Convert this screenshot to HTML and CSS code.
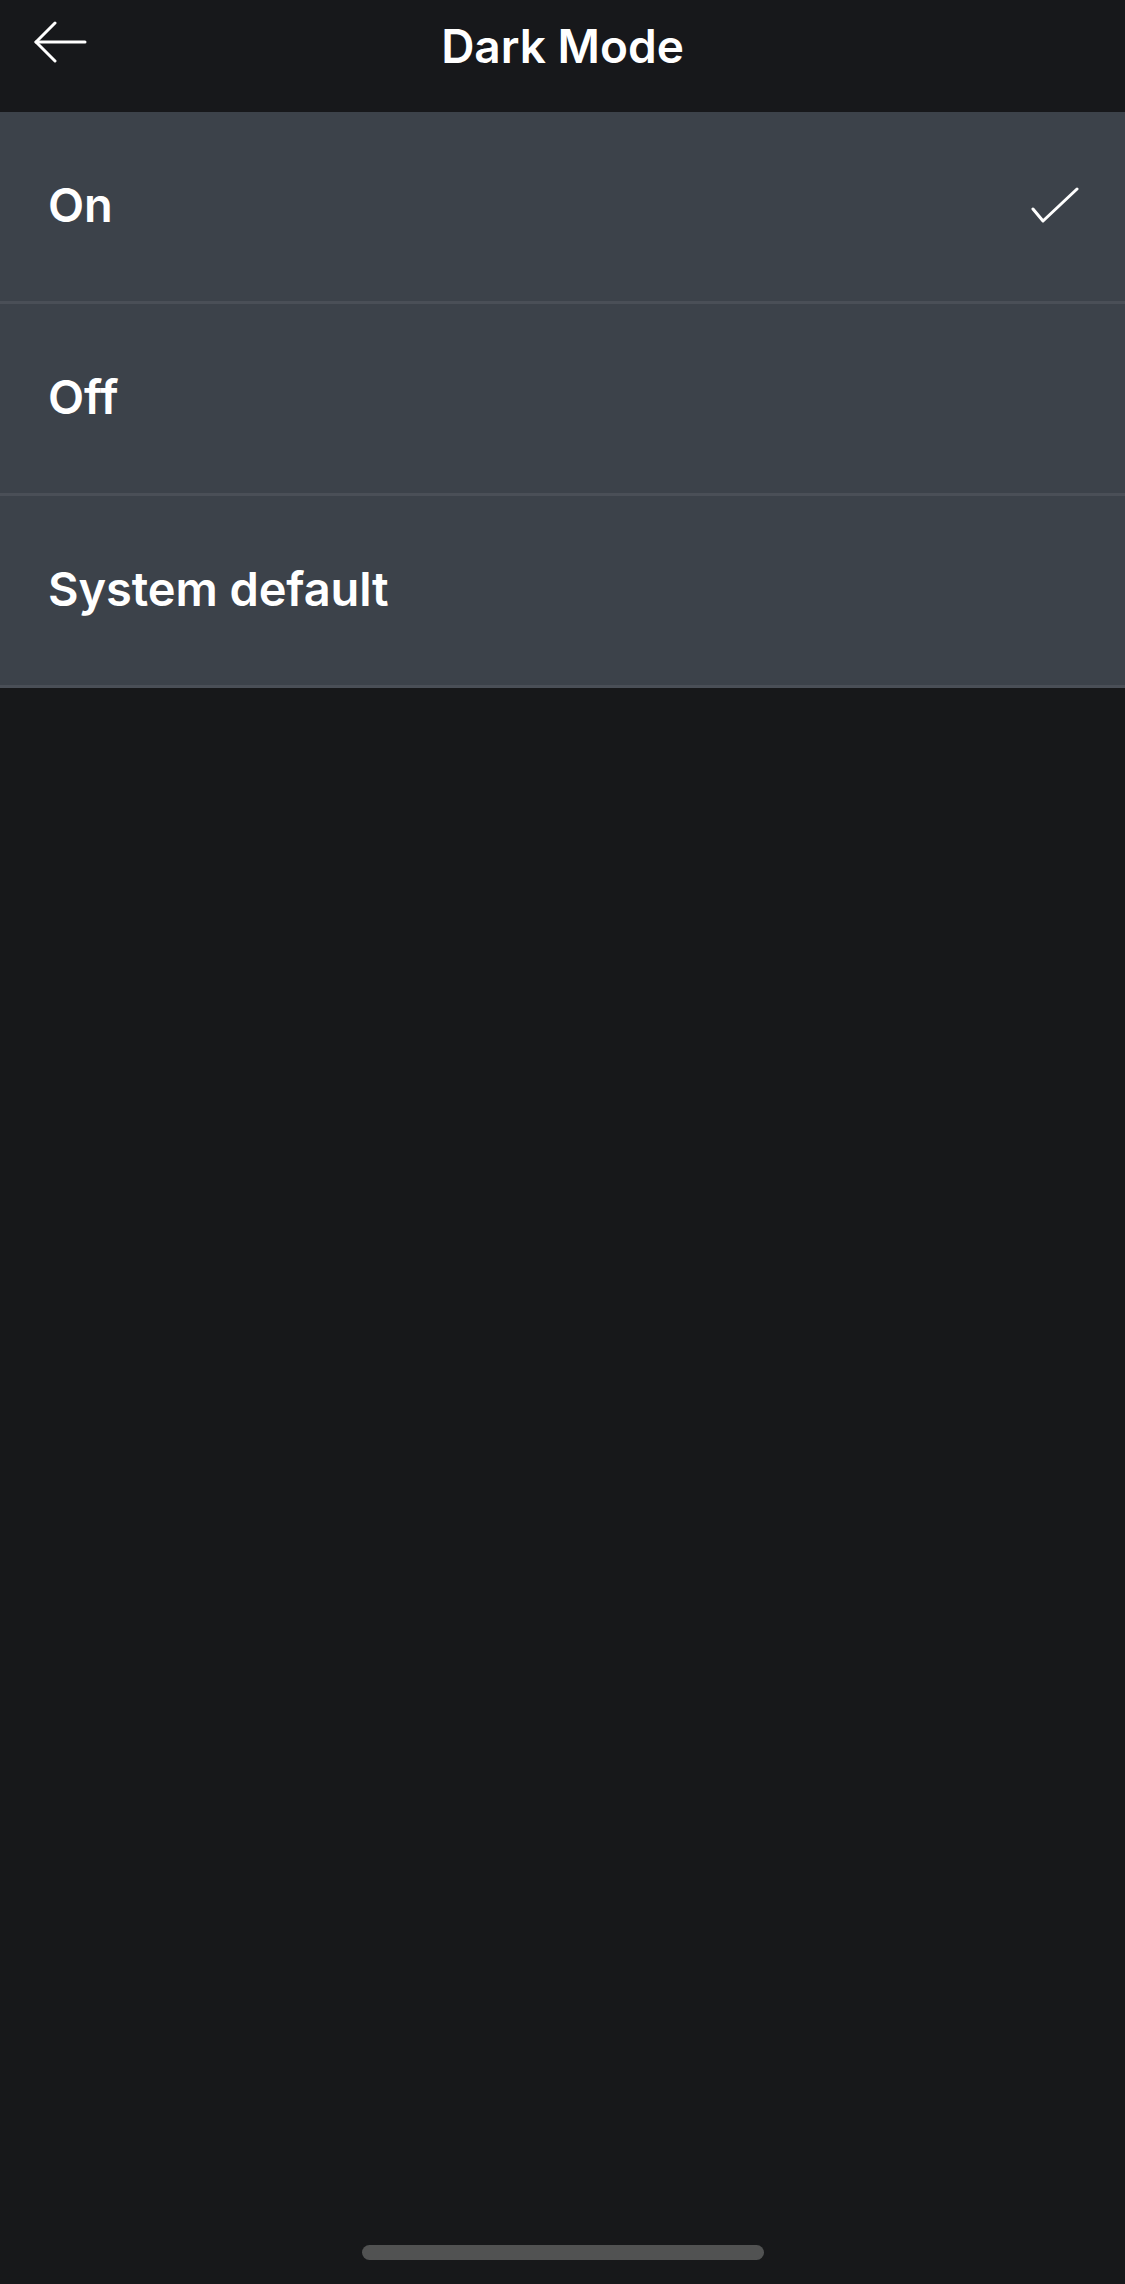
FILE: index.html
```html
<!DOCTYPE html>
<html lang="en">
<head>
<meta charset="utf-8">
<title>Dark Mode</title>
<link rel="stylesheet" href="styles.css">
</head>
<body>
<div class="screen">
  <header class="topbar">
    <div class="back">
      <svg width="54" height="42" viewBox="0 0 54 42" fill="none" stroke="#ffffff" stroke-width="3" stroke-linecap="round" stroke-linejoin="round">
        <path d="M52 21 H3"/>
        <path d="M22 2 L3 21 L22 40"/>
      </svg>
    </div>
    <h1 class="title">Dark Mode</h1>
    <div class="spacer"></div>
  </header>
  <ul class="options">
    <li class="option selected">
      <span class="label">On</span>
      <svg class="check" width="48" height="36" viewBox="0 0 48 36" fill="none" stroke="#ffffff" stroke-width="3" stroke-linecap="round" stroke-linejoin="round">
        <path d="M2 22 L12 34 L46 2"/>
      </svg>
    </li>
    <li class="option"><span class="label">Off</span></li>
    <li class="option"><span class="label">System default</span></li>
  </ul>
  <div class="home-indicator"></div>
</div>
</body>
</html>
```
FILE: styles.css
```css
html, body {
  margin: 0;
  padding: 0;
  background: #17181a;
}
body {
  font-family: "Inter", "Liberation Sans", sans-serif;
  color: #ffffff;
}
.screen {
  width: 1125px;
  height: 2284px;
  display: flex;
  flex-direction: column;
  background: #17181a;
}
.topbar {
  height: 112px;
  display: grid;
  grid-template-columns: 1fr auto 1fr;
  align-items: start;
  background: #17181b;
}
.back {
  padding: 21px 0 0 33px;
  display: flex;
}
.title {
  margin: 0;
  padding-top: 18px;
  font-size: 46px;
  font-weight: 600;
  letter-spacing: 0;
  line-height: 56px;
}
.options {
  list-style: none;
  margin: 0;
  padding: 0;
}
.option {
  height: 189px;
  display: flex;
  align-items: center;
  justify-content: space-between;
  padding: 0 46px 0 48px;
  background: #3c424a;
  border-bottom: 3px solid #4a4f57;
}
.label {
  font-size: 47px;
  font-weight: 600;
  letter-spacing: -0.1px;
  line-height: 56px;
  padding-bottom: 3px;
}
.check {
  margin-top: -4px;
}
.home-indicator {
  margin: auto auto 24px;
  width: 402px;
  height: 15px;
  border-radius: 8px;
  background: #515252;
}
```
